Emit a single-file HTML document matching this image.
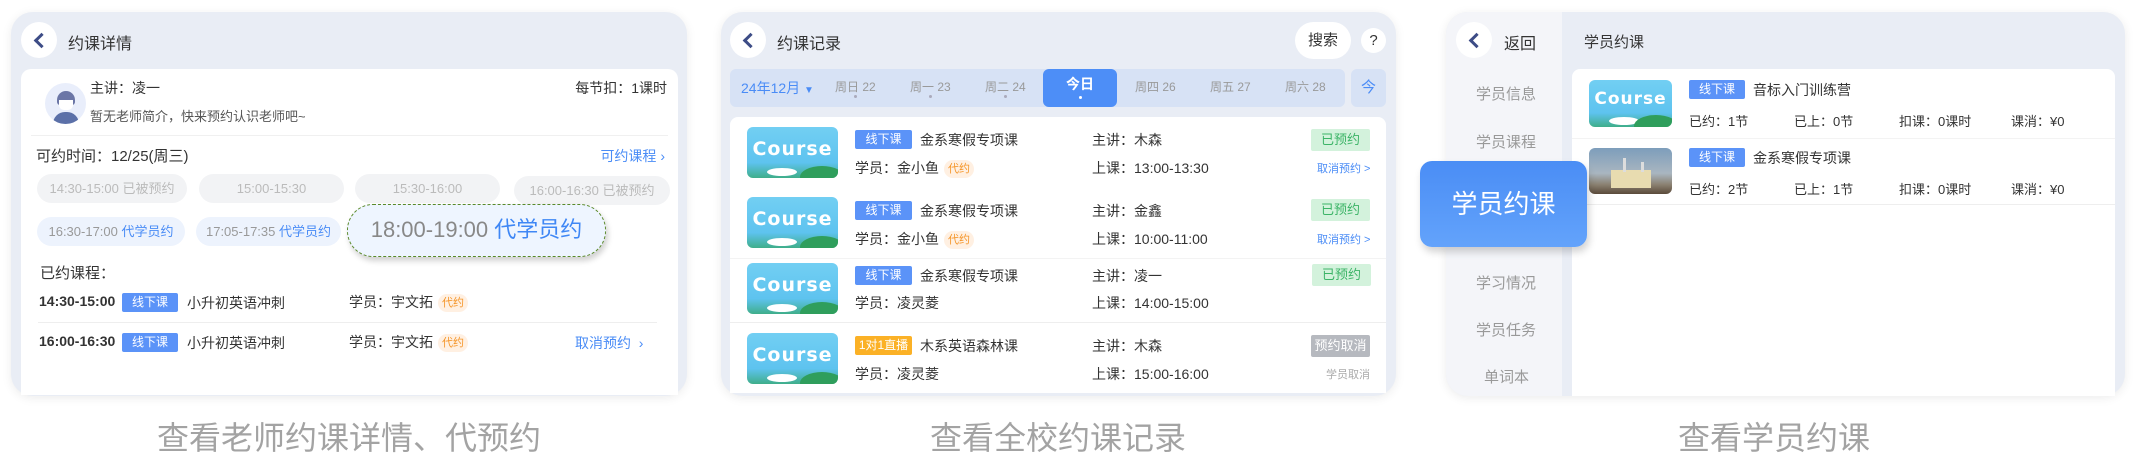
<!DOCTYPE html>
<html><head><meta charset="utf-8"><style>
*{margin:0;padding:0;box-sizing:border-box}
body{width:2136px;height:456px;background:#fff;position:relative;overflow:hidden;font-family:"Liberation Sans","Noto Sans CJK SC",sans-serif;color:#333}
.a{position:absolute;white-space:nowrap}
.card{position:absolute;background:#e9edf5;border-radius:22px;box-shadow:0 2px 10px rgba(0,0,0,.08);overflow:hidden}
.back{position:absolute;width:36px;height:36px;border-radius:50%;background:#fff}
.back:after{content:"";position:absolute;left:15px;top:13px;width:8px;height:8px;border-left:3px solid #3d4c86;border-bottom:3px solid #3d4c86;transform:rotate(45deg)}
.tag{position:absolute;background:#5b93f8;color:#fff;font-size:12px;text-align:center;border-radius:2px;line-height:19px;height:19px}
.dy{display:inline-block;background:#fff0e2;color:#f5962a;font-size:11px;border-radius:9px;padding:0 4px;line-height:18px;margin-left:5px;vertical-align:middle}
.slot{position:absolute;height:29px;border-radius:15px;background:#f2f3f5;color:#bbb;font-size:13px;text-align:center;line-height:29px}
.slot.b{background:#edf3fd;color:#999}
.slot.b span{color:#4a8cf6}
.cap{position:absolute;top:418px;font-size:32px;color:#a3a3a3;white-space:nowrap;line-height:40px}
.thumb{position:absolute;width:91px;height:51px;border-radius:6px;overflow:hidden;background:linear-gradient(180deg,#72cff3 0%,#5ec3ef 70%,#3fae8a 100%)}
.thumb b{position:absolute;left:0;right:0;top:11px;text-align:center;color:#fff;font-size:19px;font-family:"DejaVu Sans",sans-serif;letter-spacing:1px}
.thumb i{position:absolute;right:-6px;bottom:-10px;width:44px;height:22px;border-radius:50%;background:#2f9e5c}
.thumb u{position:absolute;left:20px;bottom:2px;width:30px;height:8px;border-radius:50%;background:#fff}
.st{position:absolute;width:59px;height:22px;line-height:22px;text-align:center;font-size:13px;border-radius:2px;background:#d3f2dc;color:#3cb467}
.f14{font-size:14px}
.dot{position:absolute;width:3px;height:3px;border-radius:50%;background:#aab}
</style></head><body>

<!-- Panel 1 -->
<div class="card" style="left:11px;top:12px;width:676px;height:384px"></div>
<div class="back" style="left:21px;top:22px"></div>
<div class="a" style="left:68px;top:30px;font-size:16px">约课详情</div>
<div class="a" style="left:21px;top:69px;width:657px;height:326px;background:#fff;border-radius:10px 10px 0 0"></div>
<div class="a" style="left:45px;top:83px;width:41px;height:41px;border-radius:50%;background:#e9eefb;overflow:hidden">
 <div style="position:absolute;left:12px;top:8px;width:18px;height:14px;border-radius:9px 9px 3px 3px;background:#6b76a6"></div>
 <div style="position:absolute;left:14px;top:17px;width:14px;height:10px;background:#fff;border-radius:0 0 5px 5px"></div>
 <div style="position:absolute;left:8px;top:29px;width:26px;height:14px;border-radius:12px 12px 0 0;background:#5b70a8"></div>
</div>
<div class="a f14" style="left:90px;top:78px">主讲：凌一</div>
<div class="a" style="left:90px;top:106px;font-size:13px;color:#555">暂无老师简介，快来预约认识老师吧~</div>
<div class="a f14" style="right:1469px;top:78px">每节扣：1课时</div>
<div class="a" style="left:31px;top:135px;width:637px;height:1px;background:#f0f0f0"></div>
<div class="a" style="left:36px;top:145px;font-size:15px">可约时间：12/25(周三)</div>
<div class="a" style="right:1471px;top:146px;font-size:14px;color:#4a8cf6">可约课程 ›</div>
<div class="slot" style="left:37px;top:174px;width:150px">14:30-15:00 已被预约</div>
<div class="slot" style="left:199px;top:174px;width:145px">15:00-15:30</div>
<div class="slot" style="left:355px;top:174px;width:145px">15:30-16:00</div>
<div class="slot" style="left:514px;top:176px;width:156px">16:00-16:30 已被预约</div>
<div class="slot b" style="left:37px;top:217px;width:148px">16:30-17:00 <span>代学员约</span></div>
<div class="slot b" style="left:196px;top:217px;width:145px">17:05-17:35 <span>代学员约</span></div>
<div class="a" style="left:347px;top:204px;width:259px;height:53px;border:1.5px dashed #5a8a2a;border-radius:26px;background:#eef5ff;box-shadow:2px 4px 6px rgba(0,0,0,.18);text-align:center;line-height:50px;font-size:22px;color:#888">18:00-19:00 <span style="color:#3f87f5">代学员约</span></div>
<div class="a" style="left:40px;top:262px;font-size:15px">已约课程：</div>
<div class="a f14" style="left:39px;top:293px;font-weight:bold">14:30-15:00</div>
<div class="tag" style="left:122px;top:293px;width:56px">线下课</div>
<div class="a f14" style="left:187px;top:293px">小升初英语冲刺</div>
<div class="a f14" style="left:349px;top:292px">学员：宇文拓<span class="dy">代约</span></div>
<div class="a" style="left:38px;top:322px;width:619px;height:1px;background:#eee"></div>
<div class="a f14" style="left:39px;top:333px;font-weight:bold">16:00-16:30</div>
<div class="tag" style="left:122px;top:333px;width:56px">线下课</div>
<div class="a f14" style="left:187px;top:333px">小升初英语冲刺</div>
<div class="a f14" style="left:349px;top:332px">学员：宇文拓<span class="dy">代约</span></div>
<div class="a f14" style="left:575px;top:333px;color:#4a8cf6">取消预约 &nbsp;›</div>
<div class="cap" style="left:157px">查看老师约课详情、代预约</div>

<!-- Panel 2 -->
<div class="card" style="left:721px;top:12px;width:675px;height:384px"></div>
<div class="back" style="left:730px;top:22px"></div>
<div class="a" style="left:777px;top:30px;font-size:16px">约课记录</div>
<div class="a" style="left:1295px;top:22px;width:56px;height:37px;border-radius:19px;background:#fff;text-align:center;line-height:37px;font-size:15px">搜索</div>
<div class="a" style="left:1361px;top:28px;width:25px;height:25px;border-radius:50%;background:#fff;text-align:center;line-height:25px;font-size:15px">?</div>
<div class="a" style="left:730px;top:69px;width:615px;height:38px;background:#d7e2f5;border-radius:6px"></div>
<div class="a" style="left:741px;top:78px;font-size:14px;color:#4a8cf6">24年12月 <span style="font-size:10px">▼</span></div>
<div class="a" style="left:835px;top:78px;font-size:12px;color:#999;width:40px;text-align:center">周日 22</div>
<div class="dot" style="left:854px;top:95px"></div>
<div class="a" style="left:910px;top:78px;font-size:12px;color:#999;width:40px;text-align:center">周一 23</div>
<div class="dot" style="left:929px;top:95px"></div>
<div class="a" style="left:985px;top:78px;font-size:12px;color:#999;width:40px;text-align:center">周二 24</div>
<div class="dot" style="left:1004px;top:95px"></div>
<div class="a" style="left:1043px;top:69px;width:74px;height:38px;background:#4d8ef7;border-radius:6px;color:#fff;font-weight:bold;font-size:14px;text-align:center;line-height:30px">今日</div>
<div class="dot" style="left:1079px;top:96px;background:#fff"></div>
<div class="a" style="left:1135px;top:78px;font-size:12px;color:#999;width:40px;text-align:center">周四 26</div>
<div class="a" style="left:1210px;top:78px;font-size:12px;color:#999;width:40px;text-align:center">周五 27</div>
<div class="a" style="left:1285px;top:78px;font-size:12px;color:#999;width:40px;text-align:center">周六 28</div>
<div class="a" style="left:1351px;top:69px;width:35px;height:38px;background:#d7e2f5;border-radius:6px;color:#4a8cf6;font-size:15px;text-align:center;line-height:38px">今</div>
<div class="a" style="left:730px;top:117px;width:656px;height:276px;background:#fff;border-radius:8px 8px 0 0"></div>
<div class="a" style="left:730px;top:258px;width:656px;height:1px;background:#f3f3f3"></div>
<div class="a" style="left:730px;top:322px;width:656px;height:1px;background:#eee"></div>

<div class="thumb" style="left:747px;top:127px"><b>Course</b><u></u><i></i></div>
<div class="tag" style="left:855px;top:130px;width:57px">线下课</div>
<div class="a f14" style="left:920px;top:130px">金系寒假专项课</div>
<div class="a f14" style="left:855px;top:158px">学员：金小鱼<span class="dy">代约</span></div>
<div class="a f14" style="left:1092px;top:130px">主讲：木森</div>
<div class="a f14" style="left:1092px;top:158px">上课：13:00-13:30</div>
<div class="st" style="left:1311px;top:129px">已预约</div>
<div class="a" style="left:1317px;top:160px;font-size:11px;color:#4a8cf6">取消预约 &gt;</div>

<div class="thumb" style="left:747px;top:197px"><b>Course</b><u></u><i></i></div>
<div class="tag" style="left:855px;top:201px;width:57px">线下课</div>
<div class="a f14" style="left:920px;top:201px">金系寒假专项课</div>
<div class="a f14" style="left:855px;top:229px">学员：金小鱼<span class="dy">代约</span></div>
<div class="a f14" style="left:1092px;top:201px">主讲：金鑫</div>
<div class="a f14" style="left:1092px;top:229px">上课：10:00-11:00</div>
<div class="st" style="left:1311px;top:199px">已预约</div>
<div class="a" style="left:1317px;top:231px;font-size:11px;color:#4a8cf6">取消预约 &gt;</div>

<div class="thumb" style="left:747px;top:263px"><b>Course</b><u></u><i></i></div>
<div class="tag" style="left:855px;top:266px;width:57px">线下课</div>
<div class="a f14" style="left:920px;top:266px">金系寒假专项课</div>
<div class="a f14" style="left:855px;top:293px">学员：凌灵菱</div>
<div class="a f14" style="left:1092px;top:266px">主讲：凌一</div>
<div class="a f14" style="left:1092px;top:293px">上课：14:00-15:00</div>
<div class="st" style="left:1312px;top:264px">已预约</div>

<div class="thumb" style="left:747px;top:333px"><b>Course</b><u></u><i></i></div>
<div class="tag" style="left:855px;top:336px;width:57px;background:#fbb126">1对1直播</div>
<div class="a f14" style="left:920px;top:336px">木系英语森林课</div>
<div class="a f14" style="left:855px;top:364px">学员：凌灵菱</div>
<div class="a f14" style="left:1092px;top:336px">主讲：木森</div>
<div class="a f14" style="left:1092px;top:364px">上课：15:00-16:00</div>
<div class="st" style="left:1311px;top:335px;background:#b6b9bf;color:#fff">预约取消</div>
<div class="a" style="left:1326px;top:366px;font-size:11px;color:#aaa">学员取消</div>
<div class="cap" style="left:930px">查看全校约课记录</div>

<!-- Panel 3 -->
<div class="card" style="left:1446px;top:12px;width:679px;height:384px"></div>
<div class="a" style="left:1446px;top:12px;width:116px;height:384px;background:#f4f5f9;border-radius:22px 0 0 22px"></div>
<div class="back" style="left:1456px;top:22px"></div>
<div class="a" style="left:1504px;top:30px;font-size:16px">返回</div>
<div class="a" style="left:1584px;top:31px;font-size:15px">学员约课</div>
<div class="a" style="left:1572px;top:69px;width:543px;height:327px;background:#fff;border-radius:8px 8px 0 0"></div>
<div class="a" style="left:1476px;top:83px;font-size:15px;color:#999">学员信息</div>
<div class="a" style="left:1476px;top:131px;font-size:15px;color:#999">学员课程</div>
<div class="a" style="left:1476px;top:272px;font-size:15px;color:#999">学习情况</div>
<div class="a" style="left:1476px;top:319px;font-size:15px;color:#999">学员任务</div>
<div class="a" style="left:1484px;top:366px;font-size:15px;color:#999">单词本</div>

<div class="thumb" style="left:1589px;top:80px;width:83px;height:47px"><b style="top:9px;font-size:17px">Course</b><u></u><i></i></div>
<div class="tag" style="left:1689px;top:80px;width:56px">线下课</div>
<div class="a f14" style="left:1753px;top:80px">音标入门训练营</div>
<div class="a" style="left:1689px;top:111px;font-size:13px">已约：1节</div>
<div class="a" style="left:1794px;top:111px;font-size:13px">已上：0节</div>
<div class="a" style="left:1899px;top:111px;font-size:13px">扣课：0课时</div>
<div class="a" style="left:2011px;top:111px;font-size:13px">课消：¥0</div>
<div class="a" style="left:1572px;top:138px;width:543px;height:1px;background:#f3f3f3"></div>
<div class="a" style="left:1589px;top:148px;width:83px;height:46px;border-radius:6px;overflow:hidden;background:linear-gradient(180deg,#7d9dbb 0%,#a9b6c0 55%,#8a8070 80%,#5a4a3a 100%)">
 <div style="position:absolute;left:22px;top:22px;width:40px;height:18px;background:#e8dcb0"></div>
 <div style="position:absolute;left:34px;top:10px;width:3px;height:14px;background:#ddd"></div>
 <div style="position:absolute;left:52px;top:14px;width:3px;height:10px;background:#ddd"></div>
</div>
<div class="tag" style="left:1689px;top:148px;width:56px">线下课</div>
<div class="a f14" style="left:1753px;top:148px">金系寒假专项课</div>
<div class="a" style="left:1689px;top:179px;font-size:13px">已约：2节</div>
<div class="a" style="left:1794px;top:179px;font-size:13px">已上：1节</div>
<div class="a" style="left:1899px;top:179px;font-size:13px">扣课：0课时</div>
<div class="a" style="left:2011px;top:179px;font-size:13px">课消：¥0</div>
<div class="a" style="left:1572px;top:204px;width:543px;height:1px;background:#eee"></div>
<div class="a" style="left:1420px;top:161px;width:167px;height:86px;border-radius:12px;background:linear-gradient(180deg,#4a8df5,#63a3fb);box-shadow:2px 5px 8px rgba(0,0,0,.18);color:#fff;font-size:26px;text-align:center;line-height:86px;z-index:5">学员约课</div>
<div class="cap" style="left:1678px">查看学员约课</div>
</body></html>
